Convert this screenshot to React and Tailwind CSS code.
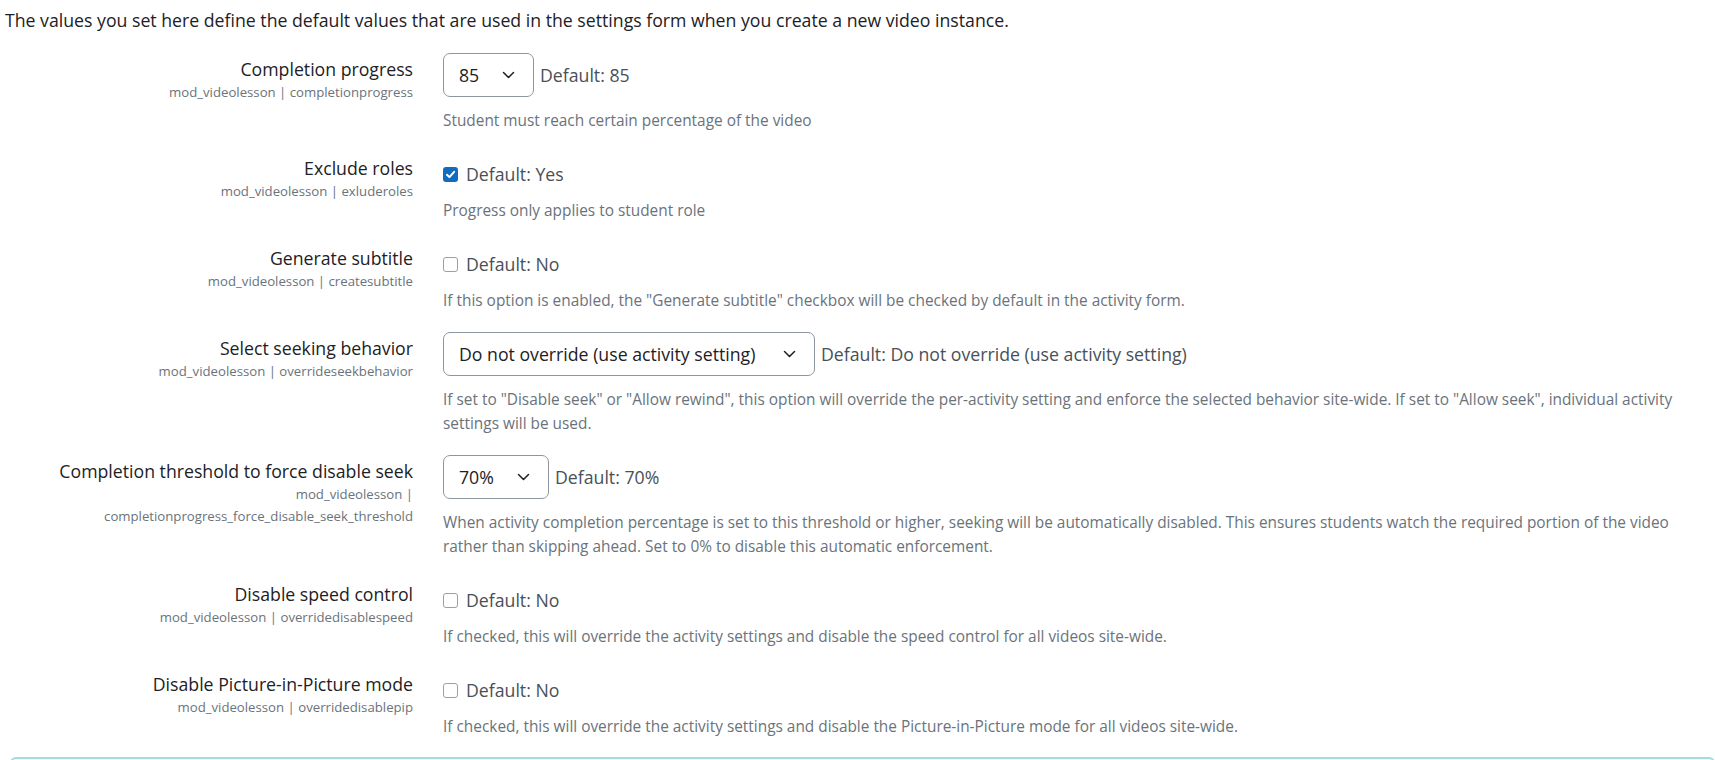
import React from 'react';

const font = { fontFamily: '"Open Sans", "Noto Sans", sans-serif' };

function Chevron() {
  return (
    <svg width="13" height="8" viewBox="0 0 13 8" fill="none" className="shrink-0">
      <path d="M1.5 1.5 6.5 6.5l5-5" stroke="#1d2125" strokeWidth="1.5" strokeLinecap="round" strokeLinejoin="round" />
    </svg>
  );
}

function Check({ checked }) {
  if (checked) {
    return (
      <span className="w-[15px] h-[15px] rounded-[3px] bg-[#0f6cbf] flex items-center justify-center shrink-0">
        <svg width="11" height="11" viewBox="0 0 10 10" fill="none">
          <path d="M1.8 5.2 4 7.4 8.3 2.6" stroke="#fff" strokeWidth="1.8" strokeLinecap="round" strokeLinejoin="round" />
        </svg>
      </span>
    );
  }
  return <span className="w-[15px] h-[15px] rounded-[3px] border border-[#9aa0a6] bg-white shrink-0" />;
}

function Label({ title, name }) {
  return (
    <div className="w-[413px] shrink-0 pl-[19px] pt-[4px] text-right">
      <div className="text-[17.7px] leading-[24px] text-[#1d2125]">{title}</div>
      <div className="text-[13.2px] leading-[22px] text-[#6a737b]">{name}</div>
    </div>
  );
}

function SelectRow({ title, name, value, width, def, desc }) {
  return (
    <div className="flex">
      <Label title={title} name={name} />
      <div className="ml-[30px] flex-1 pr-[18px]">
        <div className="flex items-center">
          <div
            className={`h-[44px] ${width} border border-[#8f959e] rounded-[7px] pl-[15px] pr-[18px] flex items-center justify-between bg-white`}
          >
            <span className="text-[17.7px] text-[#1d2125]">{value}</span>
            <Chevron />
          </div>
          <span className="ml-[6px] text-[17.7px] text-[#495057]">Default: {def}</span>
        </div>
        <p className="mt-[12px] text-[15.4px] leading-[24px] text-[#6a737b]">{desc}</p>
      </div>
    </div>
  );
}

function CheckRow({ title, name, checked, def, desc }) {
  return (
    <div className="flex">
      <Label title={title} name={name} />
      <div className="ml-[30px] flex-1 pr-[18px] pt-[10px]">
        <div className="h-[24px] flex items-center">
          <Check checked={checked} />
          <span className="ml-[8px] text-[17.7px] text-[#495057]">Default: {def}</span>
        </div>
        <p className="mt-[13px] text-[15.4px] leading-[24px] text-[#6a737b]">{desc}</p>
      </div>
    </div>
  );
}

export default function App() {
  return (
    <div className="w-[1715px] h-[760px] overflow-hidden bg-white" style={font}>
      <p className="pl-[5px] pt-[8px] text-[17.7px] leading-[24px] text-[#1d2125]">
        The values you set here define the default values that are used in the settings form when you create a new video instance.
      </p>

      <div className="mt-[21px] flex flex-col gap-[19px]">
        <SelectRow
          title="Completion progress"
          name="mod_videolesson | completionprogress"
          value="85"
          width="w-[91px]"
          def="85"
          desc="Student must reach certain percentage of the video"
        />
        <CheckRow
          title="Exclude roles"
          name="mod_videolesson | exluderoles"
          checked
          def="Yes"
          desc="Progress only applies to student role"
        />
        <CheckRow
          title="Generate subtitle"
          name="mod_videolesson | createsubtitle"
          def="No"
          desc={'If this option is enabled, the "Generate subtitle" checkbox will be checked by default in the activity form.'}
        />
        <SelectRow
          title="Select seeking behavior"
          name="mod_videolesson | overrideseekbehavior"
          value="Do not override (use activity setting)"
          width="w-[372px]"
          def="Do not override (use activity setting)"
          desc={'If set to "Disable seek" or "Allow rewind", this option will override the per-activity setting and enforce the selected behavior site-wide. If set to "Allow seek", individual activity settings will be used.'}
        />
        <SelectRow
          title="Completion threshold to force disable seek"
          name="mod_videolesson | completionprogress_force_disable_seek_threshold"
          value="70%"
          width="w-[106px]"
          def="70%"
          desc="When activity completion percentage is set to this threshold or higher, seeking will be automatically disabled. This ensures students watch the required portion of the video rather than skipping ahead. Set to 0% to disable this automatic enforcement."
        />
        <CheckRow
          title="Disable speed control"
          name="mod_videolesson | overridedisablespeed"
          def="No"
          desc="If checked, this will override the activity settings and disable the speed control for all videos site-wide."
        />
        <CheckRow
          title="Disable Picture-in-Picture mode"
          name="mod_videolesson | overridedisablepip"
          def="No"
          desc="If checked, this will override the activity settings and disable the Picture-in-Picture mode for all videos site-wide."
        />
      </div>

      <div className="mt-[18px] ml-[10px] h-[40px] border-2 border-[#a9d8e1] rounded-[6px] bg-[#f2fafc]" />
    </div>
  );
}
